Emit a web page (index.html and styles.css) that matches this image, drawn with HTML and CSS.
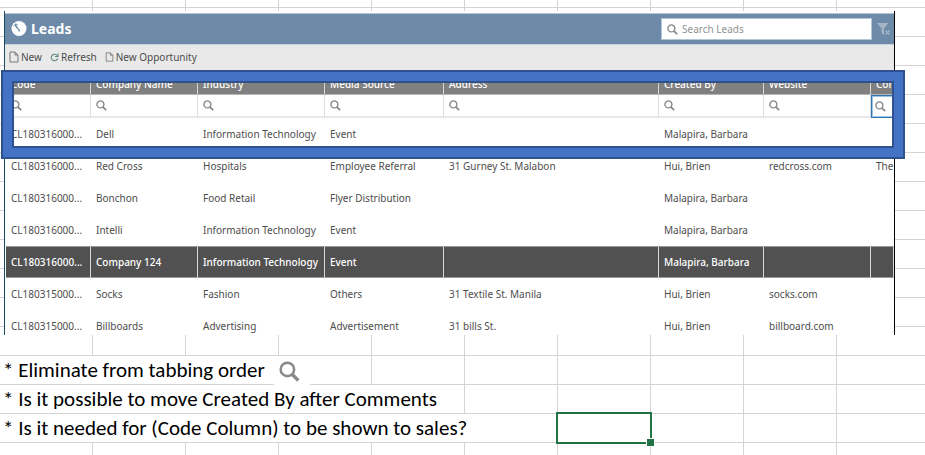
FILE: index.html
```html
<!DOCTYPE html>
<html lang="en">
<head>
<meta charset="utf-8">
<title>Leads</title>
<link rel="stylesheet" href="styles.css">
</head>
<body>
<svg class="defs" aria-hidden="true">
  <symbol id="magnifier" viewBox="0 0 20 20"><circle cx="8" cy="8" r="6.4" fill="none" stroke="currentColor" stroke-width="2.4"/><path d="M12.4 12.6L18.4 18.6" stroke="currentColor" stroke-width="3.2"/></symbol>
  <symbol id="page" viewBox="0 0 10 12"><path d="M1 1h5l3 3v7H1zM6 1v3h3" fill="none" stroke="currentColor"/></symbol>
</svg>
<main class="sheet">
  <section class="capture">
    <div class="window">
      <header class="titlebar">
        <svg class="logo" viewBox="0 0 16 16" aria-hidden="true"><circle cx="8" cy="7.500" r="7.500" fill="#fff"/><path d="M4.800 2.800C4 5 5 6 6.500 7C8 8 8.500 9 8.200 10.500" fill="none" stroke="#6d8aa8" stroke-width="1.500"/><path d="M2.300 5.500L4.800 2.800L7 4.300" fill="none" stroke="#6d8aa8" stroke-width=".8"/></svg>
        <h1>Leads</h1>
        <label class="search"><svg aria-hidden="true"><use href="#magnifier"/></svg><input type="text" placeholder="Search Leads" aria-label="Search Leads"></label>
        <button class="clear" aria-label="Clear filter"><svg viewBox="0 0 14 14" aria-hidden="true"><path d="M0 1h11.500L7 6.500V13L4.500 11V6.500z" fill="currentColor"/><path d="M8.500 8.500l4 4m0-4l-4 4" stroke="currentColor" stroke-width="1.400"/></svg></button>
      </header>
      <nav class="toolbar">
        <button><svg class="page-large" aria-hidden="true"><use href="#page"/></svg>New</button>
        <button><svg class="refresh" viewBox="0 0 9 9" aria-hidden="true"><path d="M7.200 2.500A3.300 3.300 0 1 0 7.700 5.500M8 .5v3H5" fill="none" stroke="currentColor" stroke-width="1.100"/></svg>Refresh</button>
        <button><svg class="page-small" aria-hidden="true"><use href="#page"/></svg>New Opportunity</button>
      </nav>
      <table class="leads">
        <colgroup><col class="code"><col class="company"><col class="industry"><col class="media"><col class="address"><col class="creator"><col class="website"><col class="comments"></colgroup>
        <thead>
          <tr class="heads"><th>Code</th><th>Company Name</th><th>Industry</th><th>Media Source</th><th>Address</th><th>Created By</th><th>Website</th><th>Comments</th></tr>
          <tr class="filters">
            <td><label><svg aria-hidden="true"><use href="#magnifier"/></svg><input type="text" aria-label="Filter code"></label></td>
            <td><label><svg aria-hidden="true"><use href="#magnifier"/></svg><input type="text" aria-label="Filter company name"></label></td>
            <td><label><svg aria-hidden="true"><use href="#magnifier"/></svg><input type="text" aria-label="Filter industry"></label></td>
            <td><label><svg aria-hidden="true"><use href="#magnifier"/></svg><input type="text" aria-label="Filter media source"></label></td>
            <td><label><svg aria-hidden="true"><use href="#magnifier"/></svg><input type="text" aria-label="Filter address"></label></td>
            <td><label><svg aria-hidden="true"><use href="#magnifier"/></svg><input type="text" aria-label="Filter created by"></label></td>
            <td><label><svg aria-hidden="true"><use href="#magnifier"/></svg><input type="text" aria-label="Filter website"></label></td>
            <td class="focused"><label><svg aria-hidden="true"><use href="#magnifier"/></svg><input type="text" aria-label="Filter comments"></label></td>
          </tr>
        </thead>
        <tbody>
          <tr><td>CL180316000...</td><td>Dell</td><td>Information Technology</td><td>Event</td><td></td><td>Malapira, Barbara</td><td></td><td></td></tr>
          <tr><td>CL180316000...</td><td>Red Cross</td><td>Hospitals</td><td>Employee Referral</td><td>31 Gurney St. Malabon</td><td>Hui, Brien</td><td>redcross.com</td><td>The</td></tr>
          <tr><td>CL180316000...</td><td>Bonchon</td><td>Food Retail</td><td>Flyer Distribution</td><td></td><td>Malapira, Barbara</td><td></td><td></td></tr>
          <tr><td>CL180316000...</td><td>Intelli</td><td>Information Technology</td><td>Event</td><td></td><td>Malapira, Barbara</td><td></td><td></td></tr>
          <tr class="selected"><td>CL180316000...</td><td>Company 124</td><td>Information Technology</td><td>Event</td><td></td><td>Malapira, Barbara</td><td></td><td></td></tr>
          <tr><td>CL180315000...</td><td>Socks</td><td>Fashion</td><td>Others</td><td>31 Textile St. Manila</td><td>Hui, Brien</td><td>socks.com</td><td></td></tr>
          <tr><td>CL180315000...</td><td>Billboards</td><td>Advertising</td><td>Advertisement</td><td>31 bills St.</td><td>Hui, Brien</td><td>billboard.com</td><td></td></tr>
        </tbody>
      </table>
    </div>
    <div class="frame"></div>
  </section>
  <section class="notes">
    <p class="note span-four">* Eliminate from tabbing order<span class="sample"><svg aria-hidden="true"><use href="#magnifier"/></svg></span></p>
    <p class="note span-five">* Is it possible to move Created By after Comments</p>
    <p class="note span-six">* Is it needed for (Code Column) to be shown to sales?</p>
    <div class="active-cell"></div>
  </section>
</main>
</body>
</html>
```
FILE: styles.css
```css
* { box-sizing: border-box; }

body {
  margin: 0;
  background: #fff;
  overflow: hidden;
}

button, input {
  font: inherit;
  color: inherit;
  border: 0;
  padding: 0;
  background: transparent;
}

input { min-width: 0; flex: 1; outline: 0; }

.defs { position: absolute; width: 0; height: 0; }

/* Spreadsheet canvas: 93 x 29 cells */
.sheet {
  min-height: 100vh;
  padding-top: 11px;
  background-image:
    linear-gradient(to right, transparent 92px, #d4d4d4 92px),
    linear-gradient(to bottom, transparent 28px, #d4d4d4 28px);
  background-size: 93px 29px;
  background-position: 0 0, 0 8px;
}

.capture {
  position: relative;
  margin: 0 30px 0 4px;
  font-family: "Noto Sans", sans-serif;
  font-size: 10px;
  color: #4d4d4d;
}

.window {
  overflow: hidden;
  background: #fff;
  border-left: 1px solid #1c4966;
  border-right: 1px solid #000;
  padding-top: 2px;
}

.titlebar {
  display: flex;
  align-items: center;
  height: 32px;
  padding: 0 3px 0 6px;
  background: #6d8aa8;
  border-top: 1px solid #b8c4d0;
  border-bottom: 1px solid #c5d0da;
}

.logo { width: 16px; height: 16px; }

h1 {
  margin: 0 auto 0 4px;
  font-size: 14px;
  line-height: 20px;
  color: #fff;
}

.search {
  display: flex;
  align-items: center;
  gap: 4px;
  width: 211px;
  height: 22px;
  padding: 0 5px;
  background: #fff;
  border: 1px solid #b3c6d8;
  color: #888;
}

.search svg { width: 11px; height: 11px; }
.search input::placeholder { color: #929292; opacity: 1; }

.clear { margin-left: 5px; color: #a3b4c6; }
.clear svg { display: block; width: 14px; height: 14px; }

.toolbar {
  display: flex;
  align-items: center;
  gap: 8px;
  height: 30px;
  padding: 0 4px 6px;
  background: #e9e9e9;
}

.toolbar button { display: flex; align-items: center; gap: 2px; }
.toolbar svg { color: #777; }
.page-large { width: 10px; height: 12px; }
.toolbar .refresh { width: 9px; height: 9px; color: #5c8577; }
.page-small { width: 9px; height: 10px; }

.leads {
  width: calc(100% - 1px);
  margin: 0 0 -7px 1px;
  table-layout: fixed;
  border-collapse: separate;
  border-spacing: 0;
}

.code { width: 85px; }
.company { width: 107px; }
.industry { width: 127px; }
.media { width: 119px; }
.creator { width: 105px; }
.website { width: 107px; }
.comments { width: 23px; }

.leads th, .leads td {
  height: 32px;
  padding: 0 0 0 5px;
  text-align: left;
  white-space: nowrap;
  overflow: hidden;
}

.leads .heads th {
  height: 20px;
  padding-bottom: 2px;
  background: #808080;
  color: #fff;
  font-weight: 500;
  border-right: 1px solid #d8d8d8;
  border-bottom: 1px solid #b5b5b5;
}

.leads .filters td {
  height: 23px;
  border-right: 1px solid #ddd;
  border-bottom: 2px solid #e9e9e9;
}

.filters label { display: flex; align-items: center; }
.filters svg { flex: none; width: 11px; height: 11px; color: #858585; }
.filters input { width: 0; height: 14px; }

.leads .filters .focused {
  border: 1px solid #2e75b6;
  box-shadow: inset 0 0 0 1px #9dc3e6;
  padding-left: 3px;
}

.selected td {
  background: #515151;
  color: #fff;
  font-weight: 500;
  border-top: 1px solid #999;
  border-bottom: 1px solid #999;
  border-right: 1px solid #d8d8d8;
}

/* Highlight rectangle drawn over the grid */
.frame {
  position: absolute;
  top: 59px;
  left: -3px;
  right: -10px;
  height: 89px;
  border: 2px solid #2f528f;
}

.frame::before, .frame::after { content: ""; position: absolute; }
.frame::before { inset: 0; border: 9px solid #4472c4; }
.frame::after { inset: 9px; border: 2px solid #2f528f; }

.notes {
  display: grid;
  grid-template-columns: repeat(9, 93px);
  grid-auto-rows: 29px;
  margin-top: 21px;
  font-family: Carlito, Calibri, Lato, sans-serif;
  font-size: 21px;
  line-height: 28px;
  color: #000;
}

.note {
  position: relative;
  margin: 0 1px 1px 0;
  padding-left: 3px;
  background: #fff;
  white-space: nowrap;
}

.span-four { grid-column: 1 / span 4; grid-row: 1; }
.span-five { grid-column: 1 / span 5; grid-row: 2; }
.span-six { grid-column: 1 / span 6; grid-row: 3; }

.sample {
  position: absolute;
  top: 0;
  left: 274px;
  width: 36px;
  height: 31px;
  padding: 5px;
  background: #fff;
  color: #8a8a8a;
}

.sample svg { display: block; width: 21px; height: 21px; }

.active-cell {
  grid-column: 7;
  grid-row: 3;
  position: relative;
  margin: -2px -1px -1px -2px;
  border: 2px solid #217346;
}

.active-cell::after {
  content: "";
  position: absolute;
  right: -5px;
  bottom: -5px;
  width: 7px;
  height: 7px;
  background: #217346;
  border: 1px solid #fff;
}
```
